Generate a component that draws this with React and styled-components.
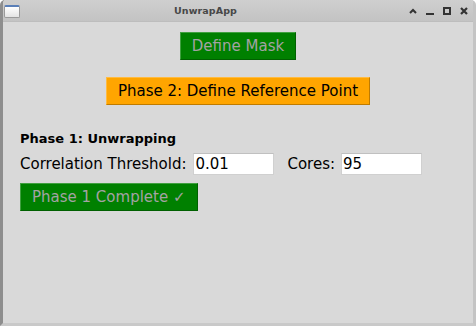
import React from "react"
import styled, { createGlobalStyle } from "styled-components"

const GlobalStyle = createGlobalStyle`
  html, body { margin: 0; padding: 0; height: 100%; background: #ffffff; }
  #root { height: 100%; }
  * { box-sizing: border-box; }
`;

const App = () => {
  return (
    <Window>
      <GlobalStyle />
      <TitleBar>
        <AppIcon />
        <Title>UnwrapApp</Title>
        <Controls>
          <Ctrl>
            <svg width="8" height="6" viewBox="0 0 8 6"><path d="M1 5 L4 2 L7 5" stroke="#333" strokeWidth="2" fill="none" /></svg>
          </Ctrl>
          <Ctrl>
            <svg width="8" height="9" viewBox="0 0 8 9"><rect x="0" y="7" width="8" height="2" fill="#333" /></svg>
          </Ctrl>
          <Ctrl>
            <svg width="8" height="8" viewBox="0 0 8 8"><rect x="1" y="1" width="6" height="6" stroke="#333" strokeWidth="2" fill="none" /></svg>
          </Ctrl>
          <Ctrl>
            <svg width="8" height="8" viewBox="0 0 8 8"><path d="M1 1 L7 7 M7 1 L1 7" stroke="#333" strokeWidth="2.2" fill="none" /></svg>
          </Ctrl>
        </Controls>
      </TitleBar>
      <Body>
        <Centered>
          <ActionButton $bg="#008000" $fg="#a3a3a3">Define Mask</ActionButton>
        </Centered>
        <Centered $top={17}>
          <ActionButton $bg="#ffa500" $fg="#000000">Phase 2: Define Reference Point</ActionButton>
        </Centered>
        <Section>
          <SectionTitle>Phase 1: Unwrapping</SectionTitle>
          <FieldRow>
            <Label>Correlation Threshold:</Label>
            <Entry defaultValue="0.01" />
            <Label $gap={13} $after={6}>Cores:</Label>
            <Entry defaultValue="95" />
          </FieldRow>
          <div>
            <ActionButton $bg="#008000" $fg="#a3a3a3">Phase 1 Complete ✓</ActionButton>
          </div>
        </Section>
      </Body>
    </Window>
  )
}

const Window = styled.div`
  height: 100%;
  display: flex;
  flex-direction: column;
  background: #d9d9d9;
  border-left: 3px solid #8e8e8e;
  border-right: 3px solid #c4c4c4;
  border-bottom: 3px solid #c9c9c9;
  border-top-right-radius: 5px;
  border-top-left-radius: 5px;
  overflow: hidden;
  font-family: "DejaVu Sans", "Noto Sans", sans-serif;
`;
const TitleBar = styled.div`
  height: 22px;
  flex: none;
  display: flex;
  align-items: center;
  padding: 0 4px 0 1px;
  background: linear-gradient(#cfcfcf, #c3c3c3);
  border-bottom: 1px solid #bdbdbd;
`;
const AppIcon = styled.div`
  width: 16px;
  height: 13px;
  margin-top: 1px;
  border: 1px solid #9a9a9a;
  border-top: 2px solid #5a7fb8;
  border-radius: 2px;
  background: linear-gradient(#ffffff, #e4e4e4);
`;
const Title = styled.div`
  flex: 1;
  text-align: center;
  font-size: 9.5px;
  font-weight: bold;
  color: #474747;
  letter-spacing: 0.1px;
  padding-right: 18px;
`;
const Controls = styled.div`
  display: flex;
  gap: 9px;
  align-items: center;
  padding-right: 1px;
`;
const Ctrl = styled.span`
  width: 8px;
  height: 9px;
  display: flex;
  align-items: center;
  justify-content: center;
`;
const Body = styled.div`
  flex: 1;
  padding: 10px 17px 0;
  display: flex;
  flex-direction: column;
`;
const Centered = styled.div`
  display: flex;
  justify-content: center;
  margin-top: ${p => p.$top || 0}px;
`;
const ActionButton = styled.button`
  height: 28px;
  padding: 0 11px;
  background: ${p => p.$bg};
  color: ${p => p.$fg};
  border: 1px solid rgba(0, 0, 0, 0.25);
  border-top-color: rgba(255, 255, 255, 0.25);
  border-left-color: rgba(255, 255, 255, 0.25);
  font-family: "DejaVu Sans", sans-serif;
  font-size: 15px;
  line-height: 1;
  cursor: pointer;
`;
const Section = styled.div`
  margin-top: 25px;
  display: flex;
  flex-direction: column;
`;
const SectionTitle = styled.div`
  font-size: 13px;
  font-weight: bold;
  color: #000;
  line-height: 17px;
`;
const FieldRow = styled.div`
  display: flex;
  align-items: center;
  margin: 6px 0 8px;
`;
const Label = styled.span`
  font-size: 15px;
  color: #000;
  margin-left: ${p => p.$gap || 0}px;
  margin-right: ${p => p.$after || 7}px;
`;
const Entry = styled.input`
  width: 81px;
  height: 22px;
  border: 1px solid #d0d0d0;
  border-top-color: #c0c0c0;
  background: #ffffff;
  font-family: "DejaVu Sans", sans-serif;
  font-size: 15px;
  padding: 0 1px;
  outline: none;
  color: #000;
`;

export default App;
